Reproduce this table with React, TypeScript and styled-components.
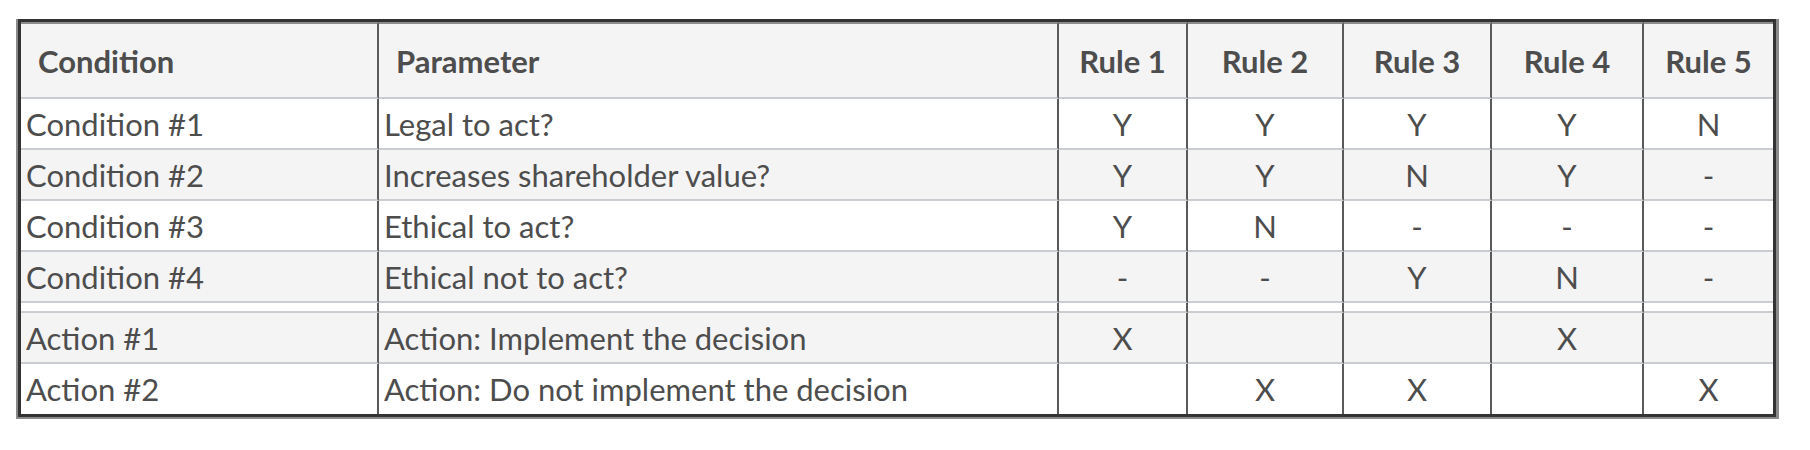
import React from "react";
import styled, { createGlobalStyle } from "styled-components";

const Global = createGlobalStyle`
  html, body { margin: 0; padding: 0; background: #ffffff; }
  body { font-family: Lato, "Open Sans", "Liberation Sans", sans-serif; }
`;

const Page = styled.div`
  padding: 19px 0 0 16px;
`;

const Frame = styled.div`
  display: inline-block;
  border-left: 2px solid #8a8a8a;
  border-right: 3px solid #8a8a8a;
  border-bottom: 2px solid #8a8a8a;
`;

const Table = styled.table`
  border-collapse: separate;
  border-spacing: 0;
  table-layout: fixed;
  width: 1758px;
  border: 3px solid #333333;
  color: #4d4d4d;
  font-size: 31px;
`;

const HeadCell = styled.th<{ $center?: boolean; $last?: boolean }>`
  box-sizing: border-box;
  height: 77px;
  background: #f4f4f4;
  border-top: 2px solid #8c8c8c;
  border-bottom: 2px solid #c9cdd1;
  border-right: ${(p) => (p.$last ? "none" : "2px solid #5a5a5a")};
  font-weight: 700;
  text-align: ${(p) => (p.$center ? "center" : "left")};
  padding: 0 ${(p) => (p.$center ? "4px" : "17px")};
  white-space: nowrap;
`;

const Row = styled.tr<{ $shade?: boolean }>`
  background: ${(p) => (p.$shade ? "#f4f4f4" : "#ffffff")};
`;

const Cell = styled.td<{ $center?: boolean; $last?: boolean; $end?: boolean }>`
  box-sizing: border-box;
  height: ${(p) => (p.$end ? "50px" : "51px")};
  border-bottom: ${(p) => (p.$end ? "none" : "2px solid #c9cdd1")};
  border-right: ${(p) => (p.$last ? "none" : "2px solid #5a5a5a")};
  text-align: ${(p) => (p.$center ? "center" : "left")};
  padding: 0 ${(p) => (p.$center ? "4px" : "5px")};
  white-space: nowrap;
  font-weight: 400;
`;

const Gap = styled.td<{ $last?: boolean }>`
  box-sizing: border-box;
  height: 10px;
  padding: 0;
  background: #ffffff;
  border-bottom: 2px solid #c9cdd1;
  border-right: ${(p) => (p.$last ? "none" : "2px solid #5a5a5a")};
`;

const widths = [358, 680, 129, 156, 148, 152, 129];

type RowData = { name: string; param: string; rules: string[] };

const conditions: RowData[] = [
  { name: "Condition #1", param: "Legal to act?", rules: ["Y", "Y", "Y", "Y", "N"] },
  { name: "Condition #2", param: "Increases shareholder value?", rules: ["Y", "Y", "N", "Y", "-"] },
  { name: "Condition #3", param: "Ethical to act?", rules: ["Y", "N", "-", "-", "-"] },
  { name: "Condition #4", param: "Ethical not to act?", rules: ["-", "-", "Y", "N", "-"] },
];

const actions: RowData[] = [
  { name: "Action #1", param: "Action: Implement the decision", rules: ["X", "", "", "X", ""] },
  { name: "Action #2", param: "Action: Do not implement the decision", rules: ["", "X", "X", "", "X"] },
];

const DataRow: React.FC<{ row: RowData; shade: boolean; end?: boolean }> = ({ row, shade, end }) => (
  <Row $shade={shade}>
    <Cell $end={end}>{row.name}</Cell>
    <Cell $end={end}>{row.param}</Cell>
    {row.rules.map((r, i) => (
      <Cell key={i} $center $end={end} $last={i === row.rules.length - 1}>
        {r}
      </Cell>
    ))}
  </Row>
);

export default function App() {
  return (
    <Page>
      <Global />
      <Frame>
        <Table>
          <colgroup>
            {widths.map((w, i) => (
              <col key={i} style={{ width: w }} />
            ))}
          </colgroup>
          <thead>
            <tr>
              <HeadCell>Condition</HeadCell>
              <HeadCell>Parameter</HeadCell>
              {["Rule 1", "Rule 2", "Rule 3", "Rule 4", "Rule 5"].map((h, i) => (
                <HeadCell key={h} $center $last={i === 4}>
                  {h}
                </HeadCell>
              ))}
            </tr>
          </thead>
          <tbody>
            {conditions.map((r, i) => (
              <DataRow key={r.name} row={r} shade={i % 2 === 1} />
            ))}
            <tr>
              {widths.map((_, i) => (
                <Gap key={i} $last={i === widths.length - 1} />
              ))}
            </tr>
            {actions.map((r, i) => (
              <DataRow key={r.name} row={r} shade={i % 2 === 0} end={i === actions.length - 1} />
            ))}
          </tbody>
        </Table>
      </Frame>
    </Page>
  );
}
